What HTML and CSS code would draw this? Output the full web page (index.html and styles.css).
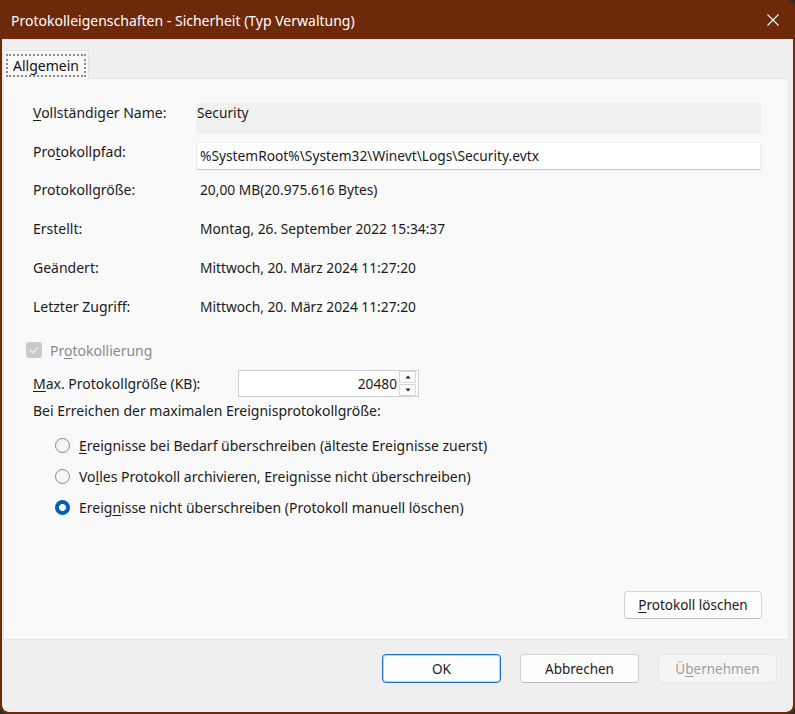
FILE: index.html
```html
<!DOCTYPE html>
<html lang="de">
<head>
<meta charset="utf-8">
<title>Protokolleigenschaften</title>
<link rel="stylesheet" href="styles.css">
</head>
<body>
<div class="window">
  <div class="titlebar">
    <span class="title">Protokolleigenschaften - Sicherheit (Typ Verwaltung)</span>
    <svg class="close" width="12" height="12" viewBox="0 0 12 12"><path d="M0.5 0.5 L11.5 11.5 M11.5 0.5 L0.5 11.5" stroke="#fff" stroke-width="1.1" fill="none"/></svg>
  </div>
  <div class="client">
    <div class="tabs">
      <div class="tab"><span class="focus">Allgemein</span></div>
    </div>
    <div class="page">
      <div class="props">
        <div class="prop prop-name">
          <div class="label"><u>V</u>ollständiger Name:</div>
          <div class="readonly">Security</div>
        </div>
        <div class="prop prop-path">
          <div class="label">Pro<u>t</u>okollpfad:</div>
          <div class="edit">%SystemRoot%\System32\Winevt\Logs\Security.evtx</div>
        </div>
        <div class="prop prop-info">
          <div class="label">Protokollgröße:</div>
          <div class="value">20,00 MB(20.975.616 Bytes)</div>
        </div>
        <div class="prop prop-info">
          <div class="label">Erstellt:</div>
          <div class="value">Montag, 26. September 2022 15:34:37</div>
        </div>
        <div class="prop prop-info">
          <div class="label">Geändert:</div>
          <div class="value">Mittwoch, 20. März 2024 11:27:20</div>
        </div>
        <div class="prop prop-info">
          <div class="label">Letzter Zugriff:</div>
          <div class="value">Mittwoch, 20. März 2024 11:27:20</div>
        </div>
      </div>

      <div class="check-row">
        <span class="checkbox"><svg width="16" height="16" viewBox="0 0 16 16"><path d="M4.5 8.2 L7 10.6 L11.6 5.6" stroke="#f4f4f4" stroke-width="1.3" fill="none" stroke-linecap="round" stroke-linejoin="round"/></svg></span>
        <span class="check-label">Pr<u>o</u>tokollierung</span>
      </div>

      <div class="max-row">
        <span class="max-label"><u>M</u>ax. Protokollgröße (KB):</span>
        <div class="spin">
          <span class="spin-value">20480</span>
          <div class="spin-buttons">
            <span class="spin-btn"><svg width="6" height="4" viewBox="0 0 6 4"><path d="M3 0.5 L5.5 3.5 L0.5 3.5 Z" fill="#222"/></svg></span>
            <span class="spin-btn"><svg width="6" height="4" viewBox="0 0 6 4"><path d="M0.5 0.5 L5.5 0.5 L3 3.5 Z" fill="#222"/></svg></span>
          </div>
        </div>
      </div>

      <div class="policy-label">Bei Erreichen der maximalen Ereignisprotokollgröße:</div>

      <div class="radios">
        <div class="radio-row"><span class="radio"></span><span><u>E</u>reignisse bei Bedarf überschreiben (älteste Ereignisse zuerst)</span></div>
        <div class="radio-row"><span class="radio"></span><span>Vo<u>l</u>les Protokoll archivieren, Ereignisse nicht überschreiben)</span></div>
        <div class="radio-row"><span class="radio radio-on"></span><span>Ereig<u>n</u>isse nicht überschreiben (Protokoll manuell löschen)</span></div>
      </div>

      <div class="clear-row">
        <button class="btn btn-clear"><u>P</u>rotokoll löschen</button>
      </div>
    </div>
    <div class="buttons">
      <button class="btn btn-ok">OK</button>
      <button class="btn">Abbrechen</button>
      <button class="btn btn-disabled">Ü<u>b</u>ernehmen</button>
    </div>
  </div>
</div>
</body>
</html>
```
FILE: styles.css
```css
html, body {
  margin: 0;
  padding: 0;
  background: #2c2c2c;
}
body {
  width: 795px;
  height: 714px;
  overflow: hidden;
  font-family: "Noto Sans", "Open Sans", sans-serif;
  font-size: 14px;
  color: #1b1b1b;
}
u {
  text-decoration-thickness: 1px;
  text-underline-offset: 2px;
}
.window {
  box-sizing: border-box;
  width: 795px;
  height: 714px;
  background: #6d290a;
  border: 2px solid #6d290a;
  border-top: 0;
  border-radius: 0 8px 8px 8px;
  display: flex;
  flex-direction: column;
  overflow: hidden;
}
.titlebar {
  height: 39px;
  flex: none;
  display: flex;
  align-items: center;
  justify-content: space-between;
  padding: 0 14px 0 9px;
  color: #ffffff;
  font-size: 14px;
}
.title {
  padding-top: 1px;
}
.close {
  display: block;
}
.client {
  flex: 1;
  background: #efefef;
  display: flex;
  flex-direction: column;
  border-radius: 0 0 7px 7px;
}
.tabs {
  height: 39px;
  flex: none;
  display: flex;
  align-items: flex-end;
  padding-left: 1px;
}
.tab {
  box-sizing: border-box;
  width: 86px;
  height: 29px;
  background: #f9f9f9;
  border: 1px solid #e2e2e2;
  border-bottom: 0;
  padding: 3px 0 0 2px;
  position: relative;
  z-index: 1;
  margin-bottom: -1px;
}
.focus {
  box-sizing: border-box;
  display: flex;
  align-items: center;
  width: 80px;
  height: 23px;
  padding-left: 5px;
  border: 2px dotted #8a8a8a;
  font-size: 14px;
  color: #111;
}
.page {
  box-sizing: border-box;
  height: 562px;
  margin: 0 4px 0 1px;
  background: #f9f9f9;
  border: 1px solid #e6e6e6;
  padding: 24px 0 0 22px;
  display: flex;
  flex-direction: column;
}
.props {
  padding-left: 7px;
}
.prop {
  display: grid;
  grid-template-columns: 163px 565px;
}
.prop-name {
  height: 30px;
  margin-bottom: 9px;
}
.prop-name .label {
  line-height: 20px;
}
.readonly {
  background: #f0f0f0;
  line-height: 20px;
  padding-left: 1px;
  font-size: 13.75px;
}
.prop-path {
  height: 28px;
}
.prop-path .label {
  line-height: 20px;
}
.edit {
  box-sizing: border-box;
  background: #ffffff;
  border: 1px solid #ececec;
  border-bottom: 1px solid #c9c9c9;
  padding-left: 3px;
  line-height: 26px;
  font-size: 13.75px;
}
.prop-info {
  height: 39px;
  align-items: center;
}
.value {
  padding-left: 4px;
  font-size: 13.75px;
}
.check-row {
  margin-top: 14px;
  height: 20px;
  display: flex;
  align-items: center;
  gap: 8px;
}
.checkbox {
  width: 16px;
  height: 16px;
  border-radius: 3px;
  background: #cacaca;
  display: block;
}
.checkbox svg {
  display: block;
}
.check-label {
  color: #8a8a8a;
}
.max-row {
  margin-top: 10px;
  padding-left: 7px;
  display: flex;
  align-items: center;
}
.max-label {
  width: 205px;
}
.spin {
  box-sizing: border-box;
  width: 181px;
  height: 27px;
  background: #ffffff;
  border: 1px solid #cfcfcf;
  display: flex;
  align-items: center;
  justify-content: flex-end;
  padding-right: 2px;
}
.spin-value {
  margin-right: 2px;
  font-size: 13.75px;
}
.spin-buttons {
  display: flex;
  flex-direction: column;
  gap: 1px;
}
.spin-btn {
  box-sizing: border-box;
  width: 17px;
  height: 12px;
  border: 1px solid #d9d9d9;
  background: #fbfbfb;
  display: flex;
  align-items: center;
  justify-content: center;
}
.spin-btn svg {
  display: block;
}
.policy-label {
  margin-top: 4px;
  padding-left: 7px;
  line-height: 20px;
}
.radios {
  margin-top: 9px;
  padding-left: 29px;
}
.radio-row {
  height: 31px;
  display: flex;
  align-items: center;
  gap: 9px;
}
.radio {
  box-sizing: border-box;
  width: 15px;
  height: 15px;
  border-radius: 50%;
  border: 1px solid #868686;
  background: #f6f6f6;
  display: block;
}
.radio-on {
  border: 0;
  background: radial-gradient(circle, #ffffff 0 3.2px, #005fb8 3.8px);
}
.clear-row {
  margin-top: auto;
  padding: 0 26px 20px 0;
  display: flex;
  justify-content: flex-end;
}
.btn {
  box-sizing: border-box;
  height: 28px;
  font-family: inherit;
  font-size: 13.5px;
  color: #1b1b1b;
  background: #fdfdfd;
  border: 1px solid #d3d3d3;
  border-bottom-color: #bdbdbd;
  border-radius: 4px;
  padding: 0;
}
.btn-clear {
  width: 138px;
}
.buttons {
  flex: 1;
  display: flex;
  justify-content: flex-end;
  align-items: flex-start;
  gap: 19px;
  padding: 14px 16px 0 0;
}
.buttons .btn {
  width: 119px;
  height: 29px;
}
.btn-ok {
  border: 1px solid #1a6fc4;
  box-shadow: inset 0 0 0 1px #b9d5f0;
}
.btn-disabled {
  background: #f5f5f5;
  border: 1px solid #e6e6e6;
  color: #a0a0a0;
}
```
